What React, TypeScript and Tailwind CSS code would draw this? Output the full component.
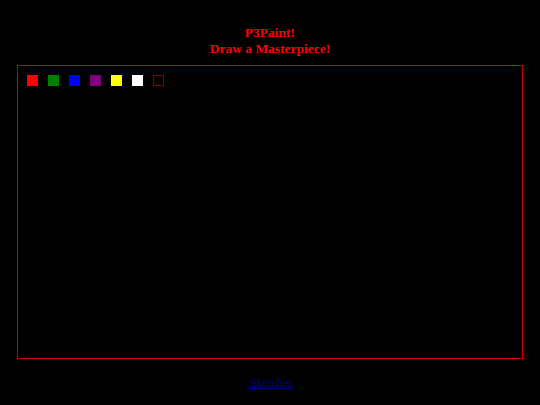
import React, { useState } from "react";

const colors = ["#ff0000", "#008000", "#0000ff", "#800080", "#ffff00", "#ffffff"];

export default function App() {
  const [active, setActive] = useState("#ff0000");

  return (
    <div className="w-[540px] h-[405px] bg-black flex flex-col items-center" style={{ fontFamily: '"Liberation Serif", "Times New Roman", serif' }}>
      <div className="mt-[25px] text-center text-[#ff0000] font-bold text-[13.5px] leading-[15.5px]">
        <div>P3Paint!</div>
        <div>Draw a Masterpiece!</div>
      </div>

      <div className="mt-[9px] w-[506px] h-[294px] border border-[#d00000] self-start ml-[17px]">
        <div className="flex gap-[10px] pl-[9px] pt-[9px]">
          {colors.map((c) => (
            <button
              key={c}
              type="button"
              onClick={() => setActive(c)}
              className="w-[11px] h-[11px] cursor-pointer"
              style={{ backgroundColor: c }}
            />
          ))}
          <button
            type="button"
            onClick={() => setActive("eraser")}
            className="w-[11px] h-[11px] border border-[#800000] cursor-pointer"
          />
        </div>
      </div>

      <a href="#" className="mt-[17px] text-[12px] leading-[14px] text-[#00008b] underline">
        &nbsp;Sketches
      </a>
    </div>
  );
}
